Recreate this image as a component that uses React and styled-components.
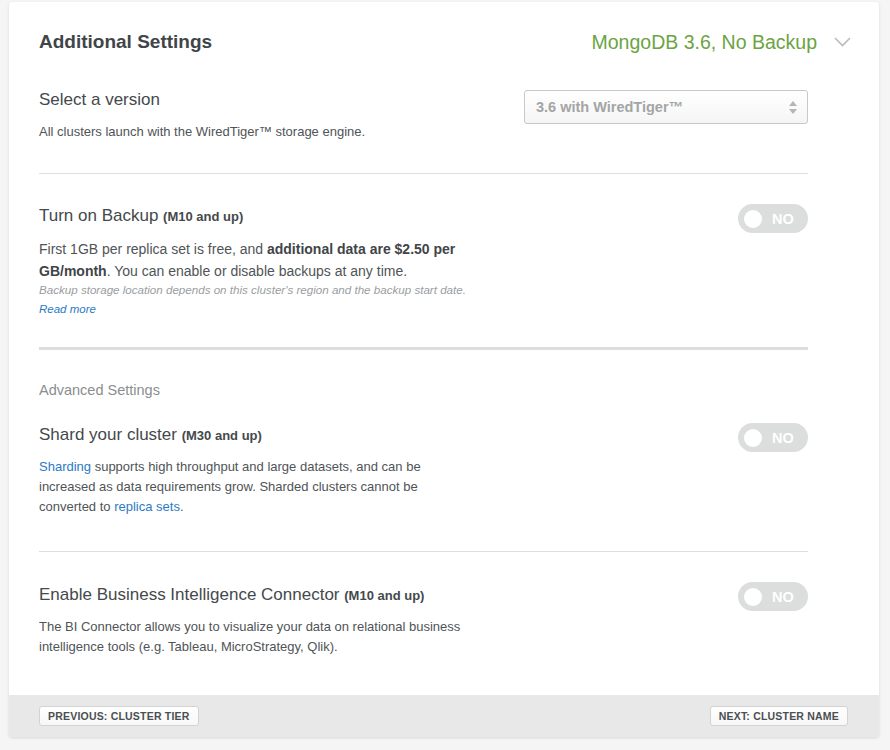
import React from "react";
import styled, { createGlobalStyle } from "styled-components";

const GlobalStyle = createGlobalStyle`
    html, body {
        margin: 0;
        padding: 0;
        background: #f4f5f4;
        font-family: "Liberation Sans", Arial, sans-serif;
        color: #494f52;
    }
`;

const Page = styled.div`
    padding: 2px 11px 13px 9px;
`;

const Card = styled.div`
    width: 870px;
    background: #fff;
    border-radius: 3px;
    box-shadow: 0 1px 3px rgba(0, 0, 0, 0.12);
    overflow: hidden;
`;

const Body = styled.div`
    padding: 20px 0 0 30px;
`;

const Header = styled.div`
    display: flex;
    align-items: center;
    justify-content: space-between;
    height: 40px;
    padding-right: 28px;
`;

const Heading = styled.h2`
    margin: 0;
    font-size: 19px;
    font-weight: bold;
    color: #3f4548;
`;

const Summary = styled.div`
    display: flex;
    align-items: center;
    gap: 17px;
    font-size: 19.5px;
    color: #6ba442;
`;

const Sections = styled.div`
    width: 769px;
`;

const Section = styled.div`
    padding: ${(p) => p.$pad || "32px 0"};
    border-bottom: ${(p) => (p.$thick ? "3px solid #dcdddd" : p.$last ? "none" : "1px solid #dedede")};
`;

const Row = styled.div`
    display: flex;
    justify-content: space-between;
    align-items: flex-start;
`;

const Info = styled.div`
    max-width: ${(p) => p.$max || "440px"};
`;

const Title = styled.div`
    font-size: 17px;
    line-height: 20px;
    color: #44494c;
`;

const Tier = styled.b`
    font-size: 13px;
`;

const Desc = styled.p`
    margin: ${(p) => p.$mt || "11px"} 0 0;
    font-size: ${(p) => p.$size || "13px"};
    line-height: ${(p) => p.$lh || "20px"};
    color: #4f5457;
    b {
        color: #3f4548;
    }
`;

const Note = styled.p`
    margin: 0;
    font-size: 11.6px;
    font-style: italic;
    line-height: 16px;
    color: #9a9d9f;
`;

const More = styled.div`
    line-height: 18px;
    margin-top: 1px;
`;

const Link = styled.a`
    color: #2b7ac4;
    text-decoration: none;
    font-style: ${(p) => (p.$italic ? "italic" : "normal")};
    font-size: ${(p) => p.$size || "inherit"};
`;

const SubHeading = styled.div`
    font-size: 14.5px;
    line-height: 20px;
    color: #8a8e90;
    margin-bottom: 25px;
`;

const Select = styled.div`
    width: 284px;
    height: 34px;
    box-sizing: border-box;
    border: 1px solid #c6c8c9;
    border-radius: 3px;
    background: linear-gradient(#fff, #f5f5f5);
    display: flex;
    align-items: center;
    justify-content: space-between;
    padding: 0 10px 0 11px;
    font-size: 14.5px;
    font-weight: bold;
    color: #a3a5a6;
`;

const Toggle = styled.div`
    width: 70px;
    height: 29px;
    margin-top: ${(p) => p.$mt || "-2px"};
    border-radius: 15px;
    background: #dcdddd;
    display: flex;
    align-items: center;
    padding: 0 6px;
    box-sizing: border-box;
    gap: 10px;
    color: #fff;
    font-weight: bold;
    font-size: 14.5px;
`;

const Knob = styled.span`
    width: 18px;
    height: 18px;
    border-radius: 50%;
    background: #fff;
`;

const Footer = styled.div`
    margin-top: 38px;
    height: 42px;
    background: #e7e8e7;
    display: flex;
    align-items: center;
    justify-content: space-between;
    padding: 0 31px 0 30px;
`;

const NavButton = styled.button`
    height: 20px;
    padding: 0 8px;
    border: 1px solid #d2d4d4;
    border-radius: 3px;
    background: linear-gradient(#fff, #f7f7f7);
    font-family: "Liberation Sans", Arial, sans-serif;
    font-size: 10.5px;
    font-weight: bold;
    letter-spacing: 0.2px;
    text-transform: uppercase;
    color: #4a4f52;
`;

const Chevron = () => (
    <svg width="17" height="10" viewBox="0 0 17 10" fill="none">
        <path d="M1 1 L8.5 8.5 L16 1" stroke="#b8bbbc" strokeWidth="1.6" />
    </svg>
);

const Arrows = () => (
    <svg width="8" height="13" viewBox="0 0 8 13">
        <path d="M4 0 L8 5 H0 Z" fill="#b3b5b6" />
        <path d="M4 13 L8 8 H0 Z" fill="#b3b5b6" />
    </svg>
);

const Switch = ({ mt }) => (
    <Toggle $mt={mt}>
        <Knob />
        NO
    </Toggle>
);

const App = () => (
    <>
        <GlobalStyle />
        <Page>
            <Card>
                <Body>
                    <Header>
                        <Heading>Additional Settings</Heading>
                        <Summary>
                            MongoDB 3.6, No Backup
                            <Chevron />
                        </Summary>
                    </Header>
                    <Sections>
                        <Section $pad="28px 0 32px">
                            <Row>
                                <Info>
                                    <Title>Select a version</Title>
                                    <Desc $lh="18px" $mt="13px">
                                        All clusters launch with the WiredTiger™ storage engine.
                                    </Desc>
                                </Info>
                                <Select>
                                    3.6 with WiredTiger™
                                    <Arrows />
                                </Select>
                            </Row>
                        </Section>
                        <Section $thick $pad="32px 0 29px">
                            <Row>
                                <Info>
                                    <Title>
                                        Turn on Backup <Tier>(M10 and up)</Tier>
                                    </Title>
                                    <Desc $size="14px" $lh="22px">
                                        First 1GB per replica set is free, and <b>additional data are $2.50 per GB/month</b>. You can enable or disable backups at any time.
                                    </Desc>
                                    <Note>
                                        Backup storage location depends on this cluster's region and the backup start date.
                                    </Note>
                                    <More>
                                        <Link href="#" $italic $size="11.5px">Read more</Link>
                                    </More>
                                </Info>
                                <Switch />
                            </Row>
                        </Section>
                        <Section $pad="30px 0 34px">
                            <SubHeading>Advanced Settings</SubHeading>
                            <Row>
                                <Info $max="421px">
                                    <Title>
                                        Shard your cluster <Tier>(M30 and up)</Tier>
                                    </Title>
                                    <Desc>
                                        <Link href="#">Sharding</Link> supports high throughput and large datasets, and can be increased as data requirements grow. Sharded clusters cannot be converted to <Link href="#">replica sets</Link>.
                                    </Desc>
                                </Info>
                                <Switch />
                            </Row>
                        </Section>
                        <Section $last $pad="33px 0 0">
                            <Row>
                                <Info>
                                    <Title>
                                        Enable Business Intelligence Connector <Tier>(M10 and up)</Tier>
                                    </Title>
                                    <Desc>
                                        The BI Connector allows you to visualize your data on relational business intelligence tools (e.g. Tableau, MicroStrategy, Qlik).
                                    </Desc>
                                </Info>
                                <Switch mt="-3px" />
                            </Row>
                        </Section>
                    </Sections>
                </Body>
                <Footer>
                    <NavButton>Previous: Cluster Tier</NavButton>
                    <NavButton>Next: Cluster Name</NavButton>
                </Footer>
            </Card>
        </Page>
    </>
);

export default App;
